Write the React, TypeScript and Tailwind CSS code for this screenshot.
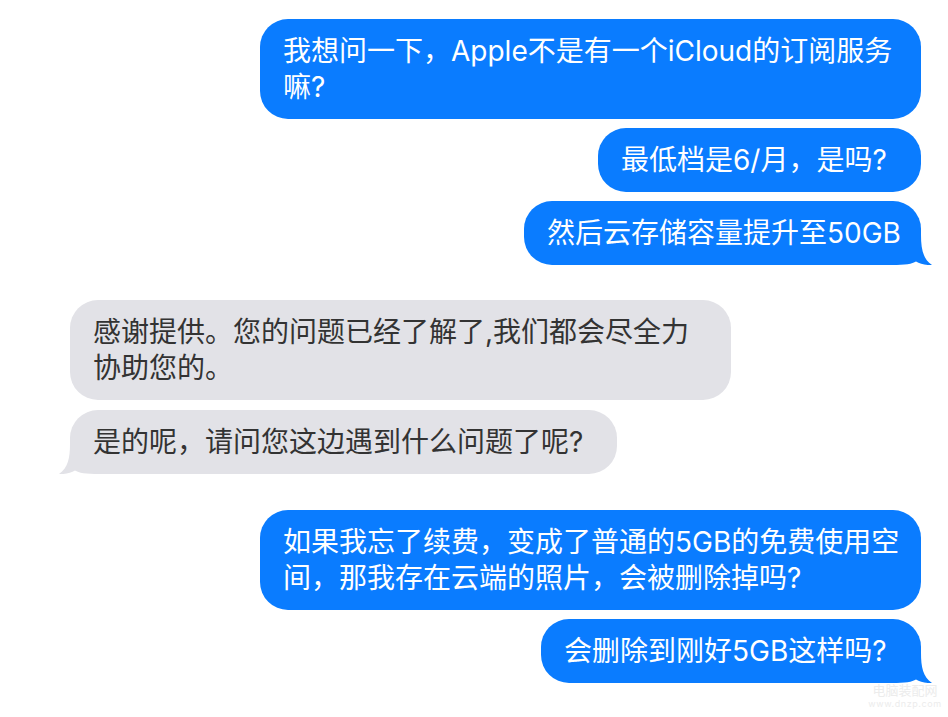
import React from "react";

const BLUE = "#0A7CFF";
const GRAY = "#E2E2E7";

function Tail({ side, color }: { side: "left" | "right"; color: string }) {
  if (side === "right") {
    return (
      <svg
        className="absolute bottom-0 right-[-11px]"
        width="41"
        height="30"
        viewBox="0 0 41 30"
      >
        <path
          d="M0 0H30C30 14 32 24 41 30C34 30.5 29 28.5 25 26.5C21 29 15 30 0 30Z"
          fill={color}
        />
      </svg>
    );
  }
  return (
    <svg
      className="absolute bottom-0 left-[-11px] -scale-x-100"
      width="41"
      height="30"
      viewBox="0 0 41 30"
    >
      <path
        d="M0 0H30C30 14 32 24 41 30C34 30.5 29 28.5 25 26.5C21 29 15 30 0 30Z"
        fill={color}
      />
    </svg>
  );
}

function Bubble({
  side,
  width,
  tail,
  className,
  children,
}: {
  side: "left" | "right";
  width: string;
  tail?: boolean;
  className?: string;
  children: React.ReactNode;
}) {
  const isRight = side === "right";
  return (
    <div
      className={`relative rounded-[28px] px-[23px] py-[14px] text-[28px] leading-[36px] whitespace-nowrap ${width} ${
        isRight ? "self-end bg-[#0A7CFF] text-white" : "self-start bg-[#E2E2E7] text-[#333333]"
      } ${className ?? ""}`}
    >
      {tail && <Tail side={side} color={isRight ? BLUE : GRAY} />}
      <span className="relative z-10">{children}</span>
    </div>
  );
}

export default function App() {
  return (
    <div
      className="relative w-[948px] h-[717px] overflow-hidden bg-white"
      style={{ fontFamily: 'Inter, "Noto Sans CJK SC", "Noto Sans", sans-serif' }}
    >
      <div className="flex flex-col pl-[70px] pr-[27px] pt-[19px]">
        <Bubble side="right" width="w-[661px]">
          我想问一下，Apple不是有一个iCloud的订阅服务
          <br />
          嘛?
        </Bubble>
        <Bubble side="right" width="w-[323px]" className="mt-[9px]">
          最低档是6/月，是吗?
        </Bubble>
        <Bubble side="right" width="w-[397px]" className="mt-[9px]" tail>
          然后云存储容量提升至50GB
        </Bubble>

        <Bubble side="left" width="w-[661px]" className="mt-[35px]">
          感谢提供。您的问题已经了解了,我们都会尽全力
          <br />
          协助您的。
        </Bubble>
        <Bubble side="left" width="w-[547px]" className="mt-[10px]" tail>
          是的呢，请问您这边遇到什么问题了呢?
        </Bubble>

        <Bubble side="right" width="w-[661px]" className="mt-[36px]">
          如果我忘了续费，变成了普通的5GB的免费使用空
          <br />
          间，那我存在云端的照片，会被删除掉吗?
        </Bubble>
        <Bubble side="right" width="w-[380px]" className="mt-[9px]" tail>
          会删除到刚好5GB这样吗?
        </Bubble>
      </div>

      <div className="absolute left-[872px] top-[683px] flex w-[66px] flex-col items-center text-[#ececec]">
        <span className="text-[13px] leading-[15px] whitespace-nowrap">电脑装配网</span>
        <span className="text-[9px] leading-[11px] tracking-[0.6px] whitespace-nowrap">www.dnzp.com</span>
      </div>
    </div>
  );
}
